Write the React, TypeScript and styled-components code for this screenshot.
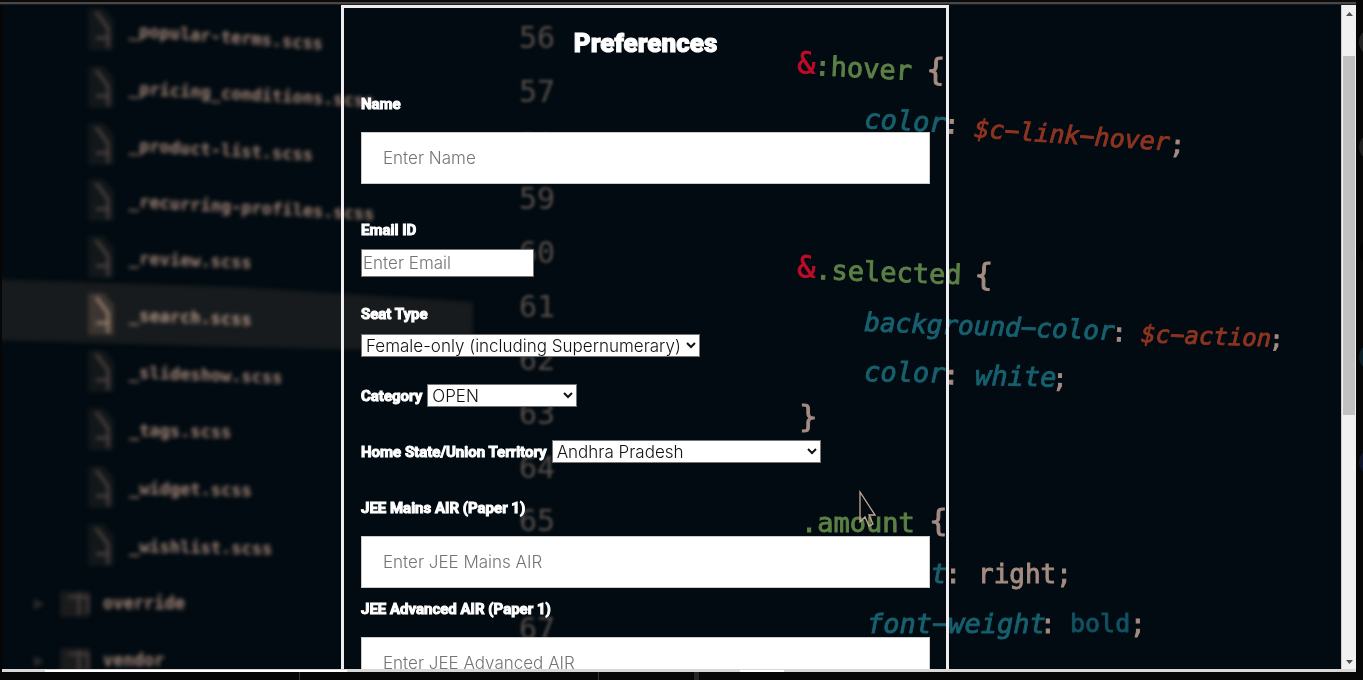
import React from "react";
import styled, { createGlobalStyle } from "styled-components";

const GlobalStyle = createGlobalStyle`
  * { box-sizing: border-box; }
  body { margin: 0; background: #060606; }
`;

const bodyFont = `Inter, "Open Sans", sans-serif`;
const headingFont = `Impact, Roboto, sans-serif`;

const Desktop = styled.div`
  height: 100vh;
  display: flex;
  flex-direction: column;
  overflow: hidden;
  background: #060606;
`;

const TopEdge = styled.div`
  flex: none;
  height: 5px;
  margin-right: 7px;
  border-top: 2px solid #0a0a0a;
  border-bottom: 1px solid #1c1c1c;
  background: #484848;
`;

const Middle = styled.div`
  flex: 1;
  min-height: 0;
  display: flex;
  padding-left: 2px;
`;

const Viewport = styled.main`
  flex: 1;
  min-width: 0;
  position: relative;
  overflow: hidden;
  background: #020b11;
`;

const Backdrop = styled.svg`
  position: absolute;
  inset: 0;
  width: 100%;
  height: 100%;
  font-family: "DejaVu Sans Mono", monospace;
  white-space: pre;
`;

const Columns = styled.div`
  position: relative;
  display: grid;
  grid-template-columns: 339fr 608fr 392fr;
`;

const Form = styled.form`
  grid-column: 2;
  padding: 15px 16px 40px 17px;
  border: 3px solid #efecef;
`;

const Title = styled.h1`
  margin: 0;
  text-align: center;
  font: 900 26px/40px ${headingFont};
  -webkit-text-stroke: 1px #fff;
  color: #fff;
`;

const Field = styled.div<{ $space: number; $gap?: number; $inline?: boolean }>`
  display: flex;
  flex-direction: ${(p) => (p.$inline ? "row" : "column")};
  align-items: ${(p) => (p.$inline ? "center" : "flex-start")};
  gap: ${(p) => p.$gap ?? 18}px;
  margin-top: ${(p) => p.$space}px;
`;

const Label = styled.label`
  font: 700 15px/20px ${headingFont};
  -webkit-text-stroke: 1px #fff;
  color: #fff;
  white-space: nowrap;
`;

const TextInput = styled.input`
  width: 100%;
  height: 52px;
  padding: 0 21px;
  border: 1px solid #ccc;
  border-radius: 0;
  background: #fff;
  font: 300 17px ${bodyFont};
  color: #222;
  &::placeholder { color: #757575; opacity: 1; }
`;

const SmallInput = styled(TextInput)`
  width: 173px;
  height: 28px;
  padding: 0 1px;
  border-color: #767676;
`;

const Select = styled.select<{ $width: number }>`
  width: ${(p) => p.$width}px;
  height: 23px;
  padding: 0;
  border: 1px solid #767676;
  border-radius: 0;
  background: #fff;
  font: 300 17px ${bodyFont};
  color: #111;
`;

const ScrollTrack = styled.div`
  flex: none;
  width: 15px;
  display: flex;
  flex-direction: column;
  align-items: center;
  justify-content: space-between;
  border-left: 1px solid #cfcfcf;
  padding: 7px 1px 5px;
  background: #f1f1f1;
`;

const ScrollSpace = styled.div`
  flex: 1;
  align-self: stretch;
  display: grid;
  grid-template-rows: 40fr 358fr 244fr;
`;

const Thumb = styled.div`
  grid-row: 2;
  background: #c1c1c1;
`;

const Arrow = styled.svg`
  width: 7px;
  height: 4px;
  fill: #505050;
`;

const SideDock = styled.svg`
  flex: none;
  width: 7px;
  height: 100%;
`;

const BottomEdge = styled.svg`
  flex: none;
  display: block;
  width: 100%;
  height: 11px;
`;

const Pointer = styled.svg`
  position: absolute;
  left: 856px;
  top: 485px;
  width: 18px;
  height: 38px;
`;

type Token = [x: number, y: number, text: string, color: string, size: number, angle: number, italic?: boolean];

const red = "#bf0c28";
const green = "#5c8045";
const teal = "#17606f";
const pale = "#a58c82";
const rust = "#8e3420";

const code: Token[] = [
  [797, 73, "&", red, 30, 2],
  [814, 75, ":hover", green, 27, 3],
  [926, 80, "{", pale, 31, 2],
  [864, 128, "color", teal, 27, 3, true],
  [943, 133, ":", pale, 27, 3],
  [974, 137, "$c−link−hover", rust, 25, 4, true],
  [1169, 153, ";", pale, 26, 4],
  [797, 277, "&", red, 30, 2],
  [815, 279, ".selected", green, 27, 2],
  [974, 285, "{", pale, 31, 2],
  [864, 331, "background−color", teal, 26, 2, true],
  [1111, 341, ":", pale, 26, 2],
  [1141, 342, "$c−action", rust, 24, 2, true],
  [1269, 347, ";", pale, 24, 2],
  [864, 381, "color", teal, 27, 1, true],
  [943, 384, ":", pale, 27, 1],
  [975, 385, "white", teal, 27, 1, true],
  [1052, 387, ";", pale, 26, 1],
  [799, 427, "}", pale, 31, 0],
  [801, 532, ".amount", green, 27, 0],
  [929, 531, "{", pale, 31, 0],
  [882, 583, "loat", teal, 27, 0, true],
  [945, 583, ":", pale, 27, 0],
  [978, 583, "right;", pale, 26, 0],
  [867, 633, "font−weight", teal, 27, 0, true],
  [1040, 633, ":", pale, 26, 0],
  [1070, 632, "bold", "#105263", 25, 0],
  [1130, 633, ";", pale, 26, 0],
];

const files: [y: number, name: string, angle: number][] = [
  [30, "_popular-terms.scss", 4],
  [88, "_pricing_conditions.scss", 3],
  [145, "_product-list.scss", 3],
  [201, "_recurring-profiles.scss", 3],
  [258, "_review.scss", 2],
  [315, "_search.scss", 2],
  [372, "_slideshow.scss", 2],
  [430, "_tags.scss", 1],
  [488, "_widget.scss", 1],
  [546, "_wishlist.scss", 1],
];

const lineNumbers: [number, number][] = Array.from({ length: 12 }, (_, i) => [56 + i, 42 + i * 53.7]);

function CodePhoto() {
  return (
    <Backdrop viewBox="0 0 1339 664" preserveAspectRatio="xMinYMin slice" aria-hidden="true">
      <defs>
        <filter id="far" x="-20%" y="-50%" width="140%" height="200%" colorInterpolationFilters="sRGB">
          <feGaussianBlur stdDeviation="2.2" />
        </filter>
        <filter id="mid" x="-30%" y="-30%" width="160%" height="160%" colorInterpolationFilters="sRGB">
          <feGaussianBlur stdDeviation="1.5" />
        </filter>
        <filter id="near" colorInterpolationFilters="sRGB"><feGaussianBlur stdDeviation="0.5" /></filter>
      </defs>
      <g transform="translate(-2 -5)">
        <path d="M-10 279L240 287L473 302V352L240 347L-10 340Z" fill="#171b1d" filter="url(#far)" />
        {files.map(([y, name, angle]) => {
          const lit = name === "_search.scss";
          return (
            <g key={name} filter="url(#far)">
              <path d={`M88 ${y - 22}h16l10 12v30h-26z`} fill={lit ? "#3c3531" : "#12171a"} />
              <path
                d={`M96 ${y - 18}l12 16v20M96 ${y + 8}h14`}
                fill="none"
                stroke={lit ? "#96806f" : "#4c413e"}
                strokeWidth="3"
              />
              <text
                x="129"
                y={y + 6}
                fontSize="17"
                fontWeight="700"
                fill={lit ? "#b39686" : "#a58679"}
                transform={`rotate(${angle} 129 ${y})`}
              >
                {name}
              </text>
            </g>
          );
        })}
        {[["override", 604], ["vendor", 661]].map(([name, y]) => (
          <g key={name} filter="url(#far)">
            <path d={`M34 ${Number(y) - 5}l10 5l-10 6z`} fill="#2c2b2d" />
            <path d={`M60 ${Number(y) - 13}h30v26h-30z`} fill="#191b1d" />
            <path d={`M68 ${Number(y) - 7}h20M79 ${Number(y) - 11}v22M88 ${Number(y) - 9}v18`} fill="none" stroke="#453d3b" strokeWidth="3" />
            <text x="103" y={Number(y) + 5} fontSize="17" fontWeight="700" fill="#a58679">{name}</text>
          </g>
        ))}
        <g fill="#554c49" fontSize="30" filter="url(#mid)">
          {lineNumbers.map(([n, y]) => <text key={n} x="519" y={y + 6}>{n}</text>)}
        </g>
        <g filter="url(#near)">
          {code.map(([x, y, text, color, size, angle, italic]) => (
            <text
              key={`${x}-${y}`}
              x={x}
              y={y}
              fill={color}
              stroke={color}
              strokeWidth="0.9"
              fontSize={size}
              fontStyle={italic ? "italic" : "normal"}
              transform={`rotate(${angle} ${x} ${y})`}
            >
              {text}
            </text>
          ))}
        </g>
      </g>
    </Backdrop>
  );
}

export default function App() {
  return (
    <>
      <GlobalStyle />
      <Desktop>
        <TopEdge />
        <Middle>
          <Viewport>
            <CodePhoto />
            <Columns>
              <Form>
                <Title>Preferences</Title>
                <Field $space={31}>
                  <Label htmlFor="name">Name</Label>
                  <TextInput id="name" type="text" placeholder="Enter Name" />
                </Field>
                <Field $space={36} $gap={9}>
                  <Label htmlFor="email">Email ID</Label>
                  <SmallInput id="email" type="email" placeholder="Enter Email" />
                </Field>
                <Field $space={27} $gap={10}>
                  <Label htmlFor="seat">Seat Type</Label>
                  <Select id="seat" $width={339}>
                    <option>Female-only (including Supernumerary)</option>
                  </Select>
                </Field>
                <Field $space={27} $gap={5} $inline>
                  <Label htmlFor="category">Category</Label>
                  <Select id="category" $width={150}>
                    <option>OPEN</option>
                  </Select>
                </Field>
                <Field $space={33} $gap={5} $inline>
                  <Label htmlFor="state">Home State/Union Territory</Label>
                  <Select id="state" $width={269}>
                    <option>Andhra Pradesh</option>
                  </Select>
                </Field>
                <Field $space={35}>
                  <Label htmlFor="mains">JEE Mains AIR (Paper 1)</Label>
                  <TextInput id="mains" type="text" placeholder="Enter JEE Mains AIR" />
                </Field>
                <Field $space={11}>
                  <Label htmlFor="advanced">JEE Advanced AIR (Paper 1)</Label>
                  <TextInput id="advanced" type="text" placeholder="Enter JEE Advanced AIR" />
                </Field>
              </Form>
            </Columns>
            <Pointer viewBox="0 0 18 38" aria-hidden="true">
              <path d="M2 2V32L7 27L11 36L15 34L11 25H17Z" fill="none" stroke="#c9a893" strokeWidth="1.3" />
            </Pointer>
          </Viewport>
          <ScrollTrack aria-hidden="true">
            <Arrow viewBox="0 0 7 4"><path d="M0 4L3.500 0L7 4Z" /></Arrow>
            <ScrollSpace><Thumb /></ScrollSpace>
            <Arrow viewBox="0 0 7 4"><path d="M0 0L3.500 4L7 0Z" /></Arrow>
          </ScrollTrack>
          <SideDock aria-hidden="true">
            <circle cx="17" cy="37" r="14" fill="#232323" />
            <circle cx="17" cy="142" r="14" fill="#202020" />
            <circle cx="17" cy="247" r="14" fill="#000" />
            <circle cx="17" cy="352" r="14" fill="#0d1f26" />
            <circle cx="17" cy="457" r="14" fill="#10142a" />
          </SideDock>
        </Middle>
        <BottomEdge aria-hidden="true">
          <path d="M2 0H1356V3H2Z" fill="#d8d8d8" />
          <path d="M45 1H347V3H45ZM740 1H784V3H740Z" fill="#fff" />
          <path d="M299 3H300V11H299ZM598 3H599V11H598Z" fill="#333" />
          <path d="M694 3H699V11H694Z" fill="#262626" />
        </BottomEdge>
      </Desktop>
    </>
  );
}
